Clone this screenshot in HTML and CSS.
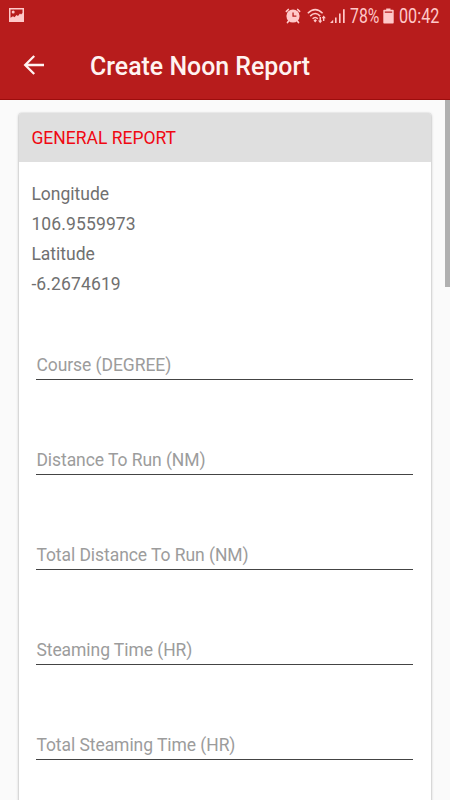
FILE: index.html
```html
<!DOCTYPE html>
<html lang="en">
<head>
<meta charset="utf-8">
<title>Create Noon Report</title>
<link rel="stylesheet" href="styles.css">
</head>
<body>
<header class="top">
  <div class="status">
    <svg class="photo" width="16" height="16" viewBox="0 0 16 16"><path fill="currentColor" fill-rule="evenodd" d="M1 1h15v14H1zM2.5 2.5v8.3l2.5-1.6 1.5 1 2-2.2 1.5 1 2-2.5 1 1 1.5-1.5V2.5z"/><circle cx="5.2" cy="5" r="1.5" fill="currentColor"/></svg>
    <div class="indicators">
      <svg class="alarm" width="16" height="16" viewBox="0 0 16 16"><path fill="currentColor" fill-rule="evenodd" d="M8 1.4a6.6 6.6 0 1 1 0 13.2A6.6 6.6 0 0 1 8 1.4zM7.4 4.4v4.4h4V7.6H8.7V4.4z"/><path d="M1.4 3.3 3.3 1.5M14.6 3.3l-1.9-1.8M3.8 12.8 2.5 14.5M12.2 12.8l1.3 1.7" stroke="currentColor" stroke-width="1.7" stroke-linecap="round"/></svg>
      <svg class="wifi" width="20" height="16" viewBox="0 0 20 16" fill="none" stroke="currentColor"><path stroke-width="1.5" d="M.8 5.3Q8.2-2 15.6 5.3M3.2 8.1Q8.2 3 13.2 8.1M5.6 10.8Q8.2 8.1 10.8 10.8"/><path fill="currentColor" stroke="none" d="m6.5 12.6 1.7-1.5 1.7 1.5-1.7 1.8zM12.5 9v3.5H11l2.2 2.7 2.2-2.7H14V9zM16 13v-2.8h-1.4l2.1-2.7 2.1 2.7h-1.4V13z"/></svg>
      <svg class="signal" width="16" height="16" viewBox="0 0 16 16" fill="currentColor"><path d="M0 15l3.2-3.2V15zM5 9.5h1.6V15H5zM9 5.5h1.6V15H9zM13 1.2h1.7V15H13z"/></svg>
      <span class="percent"><span>78%</span></span>
      <svg class="battery" width="11" height="16" viewBox="0 0 11 16" fill="currentColor"><path fill-rule="evenodd" d="M3.2.5h4.3v1.2h2.5q.7 0 .7.7v12.4q0 .7-.7.7H1q-.7 0-.7-.7V2.4q0-.7.7-.7h2.2zM1.8 3.6v1.1h7.4V3.6z"/></svg>
      <span class="clock"><span>00:42</span></span>
    </div>
  </div>
  <div class="appbar">
    <svg class="back" width="22" height="20" viewBox="0 0 22 20" fill="none" stroke="currentColor" stroke-width="2.3"><path d="M11.2 1 2.2 10l9 9M2.2 10H21"/></svg>
    <h1>Create Noon Report</h1>
  </div>
</header>
<main class="content">
  <section class="card">
    <h2>GENERAL REPORT</h2>
    <div class="position">
      <div>Longitude</div>
      <div class="value">106.9559973</div>
      <div>Latitude</div>
      <div class="value">-6.2674619</div>
    </div>
    <div class="fields">
      <div class="field">Course (DEGREE)</div>
      <div class="field">Distance To Run (NM)</div>
      <div class="field">Total Distance To Run (NM)</div>
      <div class="field">Steaming Time (HR)</div>
      <div class="field">Total Steaming Time (HR)</div>
    </div>
  </section>
  <div class="scrollbar"></div>
</main>
</body>
</html>
```
FILE: styles.css
```css
* { box-sizing: border-box; }
body {
  margin: 0;
  height: 800px;
  overflow: hidden;
  display: flex;
  flex-direction: column;
  background: #fafafa;
  font-family: Roboto, sans-serif;
  font-size: 17.5px;
}
svg { display: block; flex: none; }
.top {
  flex: none;
  height: 100px;
  background: #b71c1c;
  border-bottom: 1px solid #9c0d0d;
  color: #fff3f1;
}
.status {
  height: 32px;
  padding: 0 10px 0 8px;
  display: flex;
  align-items: center;
  justify-content: space-between;
  color: #ffc9c9;
}
.photo { margin-top: -2px; }
.indicators { display: flex; align-items: center; }
.alarm { margin: -1px 6px 0 0; }
.wifi { margin-right: 3px; }
.signal { margin-right: 4px; }
.percent, .clock { line-height: 32px; font-size: 20px; white-space: nowrap; }
.percent { width: 30px; margin-right: 3px; }
.clock { width: 41px; margin-left: 5px; }
.percent span, .clock span { display: inline-block; transform-origin: left center; }
.percent span { transform: scaleX(.79); }
.clock span { transform: scaleX(.81); }
.battery { margin-top: -1px; }
.appbar { height: 67px; display: flex; align-items: center; padding-left: 23px; }
.back { margin-top: -1px; }
h1 {
  margin: 3px 0 0 45px;
  font-size: 24.9px;
  line-height: 30px;
  font-weight: 500;
}
.content {
  flex: 1;
  min-height: 0;
  display: flex;
  justify-content: space-between;
  align-items: flex-start;
  overflow: hidden;
}
.card {
  width: 412px;
  height: 720px;
  margin: 13px 0 0 19px;
  flex: none;
  background: #fff;
  border-radius: 2px;
  box-shadow: 0 1px 3px rgba(0,0,0,.34), 0 0 1px rgba(0,0,0,.2);
}
h2 {
  margin: 0;
  height: 49px;
  padding-left: 12.4px;
  background: #dfdfdf;
  border-radius: 2px 2px 0 0;
  color: #f00812;
  font-size: 17.5px;
  font-weight: 400;
  line-height: 51px;
}
.position { padding: 17px 12px 0 12.4px; color: #707070; line-height: 30px; }
.value { letter-spacing: .13px; }
.fields { padding: 50px 18px 0 17px; }
.field {
  height: 31px;
  margin-bottom: 64px;
  border-bottom: 1px solid #444;
  color: #9c9c9c;
  letter-spacing: -.06px;
  text-indent: .4px;
  line-height: 32px;
}
.scrollbar { width: 5px; height: 187px; background: #b0b0b0; }
```
